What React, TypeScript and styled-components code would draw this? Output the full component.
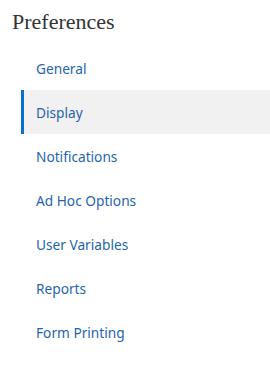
import styled, { createGlobalStyle } from 'styled-components'

const GlobalStyle = createGlobalStyle`
  body {
    margin: 0;
    background: #fff;
  }
`

const Panel = styled.div`
  width: 270px;
  height: 369px;
  background: #fff;
  padding-top: 10px;
  box-sizing: border-box;
`

const Title = styled.h1`
  margin: 0 0 0 12px;
  height: 36px;
  font-family: 'Liberation Serif', serif;
  font-weight: normal;
  font-size: 22px;
  line-height: 24px;
  color: #333;
`

const Nav = styled.ul`
  list-style: none;
  margin: 0 0 0 21px;
  padding: 0;
`

const NavItem = styled.li<{ $active?: boolean }>`
  display: flex;
  align-items: center;
  height: 44px;
  padding-left: 12px;
  border-left: 3px solid ${({ $active }) => ($active ? '#0572ce' : 'transparent')};
  background: ${({ $active }) => ($active ? '#f1f1f1' : 'transparent')};
  font-family: 'Noto Sans', sans-serif;
  font-size: 13.7px;
  color: #1f65ad;
  cursor: pointer;
`

const items = ['General', 'Display', 'Notifications', 'Ad Hoc Options', 'User Variables', 'Reports', 'Form Printing']

const App = () => {
  const active = 'Display'

  return (
    <>
      <GlobalStyle />
      <Panel>
        <Title>Preferences</Title>
        <Nav>
          {items.map(item => (
            <NavItem key={item} $active={item === active}>
              {item}
            </NavItem>
          ))}
        </Nav>
      </Panel>
    </>
  )
}

export default App
